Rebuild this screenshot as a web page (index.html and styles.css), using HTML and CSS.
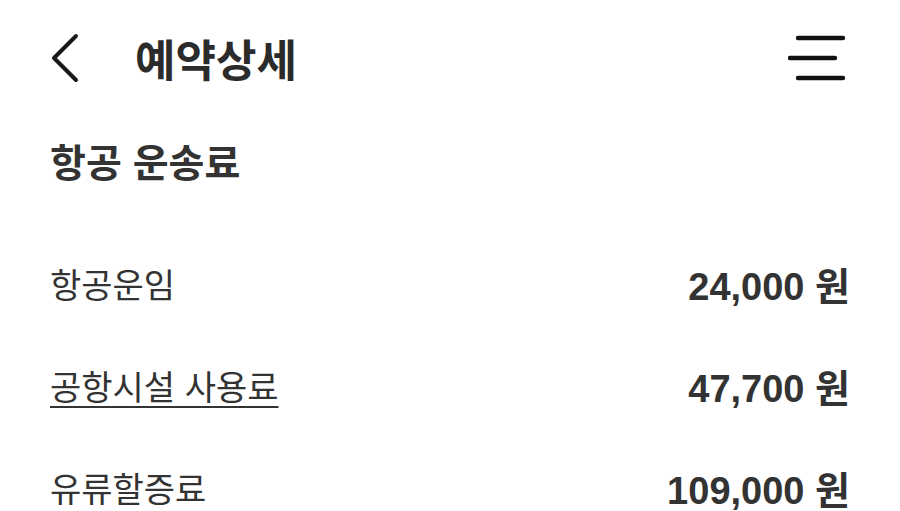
FILE: index.html
```html
<!DOCTYPE html>
<html lang="ko">

<head>
    <meta charset="UTF-8">
    <meta name="viewport" content="width=device-width, initial-scale=1.0">
    <title>예약상세</title>
    <link rel="stylesheet" href="styles.css">
</head>

<body>
    <header class="top-bar">
        <div class="top-left">
            <button type="button" class="icon-btn back-btn" aria-label="뒤로">
                <svg width="32" height="50" viewBox="0 0 32 50">
                    <path d="M28 3 L6 25 L28 47" fill="none" stroke="#1a1a1a" stroke-width="4"
                        stroke-linecap="round" stroke-linejoin="round" />
                </svg>
            </button>
            <h1 class="page-title">예약상세</h1>
        </div>
        <button type="button" class="icon-btn menu-btn" aria-label="메뉴">
            <svg width="60" height="50" viewBox="0 0 60 50">
                <line x1="10" y1="5" x2="55" y2="5" stroke="#111" stroke-width="4.4" stroke-linecap="round" />
                <line x1="2" y1="25" x2="47" y2="25" stroke="#111" stroke-width="4.4" stroke-linecap="round" />
                <line x1="10" y1="45" x2="55" y2="45" stroke="#111" stroke-width="4.4" stroke-linecap="round" />
            </svg>
        </button>
    </header>

    <main class="fare-section">
        <h2 class="section-title">항공 운송료</h2>

        <ul class="fare-list">
            <li class="fare-row">
                <span class="fare-label">항공운임</span>
                <span class="fare-value">24,000 원</span>
            </li>
            <li class="fare-row">
                <a href="#" class="fare-label fare-link">공항시설 사용료</a>
                <span class="fare-value">47,700 원</span>
            </li>
            <li class="fare-row">
                <span class="fare-label">유류할증료</span>
                <span class="fare-value">109,000 원</span>
            </li>
        </ul>
    </main>
</body>

</html>
```

FILE: styles.css
```css
/* General Styles */
body {
    margin: 0;
    font-family: "Noto Sans CJK KR", "Noto Sans", sans-serif;
    background-color: #FFFFFF;
    color: #333333;
    height: 100vh;
    overflow: hidden;
}

/* Top bar */
.top-bar {
    height: 116px;
    display: flex;
    align-items: center;
    justify-content: space-between;
    padding: 0 52px 0 48px;
}

.top-left {
    display: flex;
    align-items: center;
    gap: 55px;
}

.icon-btn {
    background: none;
    border: none;
    padding: 0;
    display: flex;
    cursor: pointer;
}

.page-title {
    margin: 0;
    font-size: 44px;
    font-weight: 700;
    line-height: 1;
    color: #2B2B2B;
}

/* Fare section */
.fare-section {
    padding: 0 50px 0 50px;
}

.section-title {
    margin: 0;
    padding: 22px 0;
    font-size: 39px;
    line-height: 44px;
    font-weight: 700;
    color: #333333;
}

.fare-list {
    list-style: none;
    margin: 0;
    padding: 28px 0 0;
}

.fare-row {
    height: 102px;
    display: flex;
    align-items: center;
    justify-content: space-between;
}

.fare-label {
    font-size: 34px;
    font-weight: 400;
    color: #333333;
}

.fare-link {
    text-decoration: underline;
    text-decoration-thickness: 2px;
    text-underline-offset: 6px;
}

.fare-value {
    font-family: "Liberation Sans", "Noto Sans CJK KR", sans-serif;
    font-size: 38px;
    font-weight: 700;
    color: #333333;
}
```
